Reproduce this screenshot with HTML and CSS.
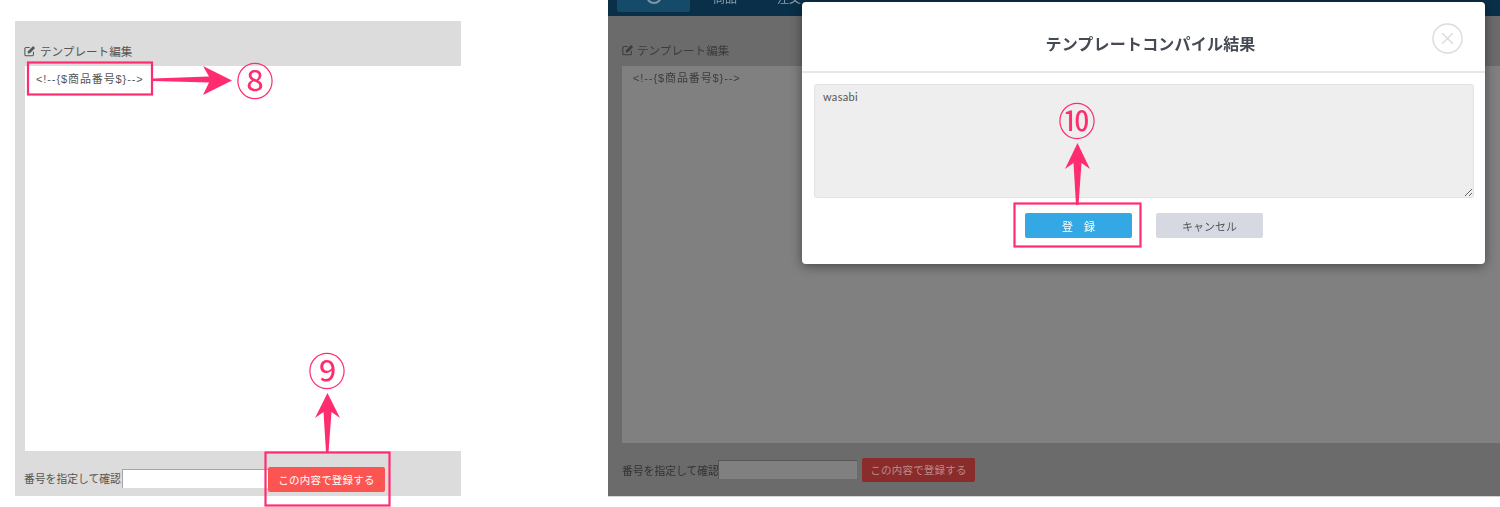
FILE: index.html
```html
<!DOCTYPE html>
<html lang="ja">
<head>
    <meta charset="UTF-8">
    <title>テンプレート編集</title>
    <link rel="stylesheet" href="styles.css">
</head>
<body>
    <div class="page">
        <!-- left capture -->
        <section class="shot shot-light">
            <h2 class="edit-title">
                <svg class="edit-icon" viewBox="0 0 14 14"><path d="M11 8v3a1.6 1.6 0 0 1-1.6 1.6H2.6A1.6 1.6 0 0 1 1 11V4.6A1.6 1.6 0 0 1 2.6 3h4"/><path class="pen" d="M5 7.2 10.6 1.6l2 2L7 9.2l-2.400.4z"/></svg>
                テンプレート編集
            </h2>
            <textarea class="editor" readonly>&lt;!--{$商品番号$}--&gt;</textarea>
            <div class="confirm-row">
                <label class="confirm-label">番号を指定して確認</label>
                <input class="confirm-input" type="text">
                <button class="btn-save">この内容で登録する</button>
            </div>
        </section>

        <!-- right capture, dimmed behind the modal -->
        <section class="shot-dark">
            <nav class="topnav">
                <div class="nav-tab"><span class="nav-ring"></span></div>
                <span class="nav-item">商品</span>
                <span class="nav-item">注文</span>
            </nav>
            <div class="shot-dark-body">
                <h2 class="edit-title">
                    <svg class="edit-icon" viewBox="0 0 14 14"><path d="M11 8v3a1.6 1.6 0 0 1-1.6 1.6H2.6A1.6 1.6 0 0 1 1 11V4.6A1.6 1.6 0 0 1 2.6 3h4"/><path class="pen" d="M5 7.2 10.6 1.6l2 2L7 9.2l-2.400.4z"/></svg>
                    テンプレート編集
                </h2>
                <textarea class="editor" readonly>&lt;!--{$商品番号$}--&gt;</textarea>
                <div class="confirm-row">
                    <label class="confirm-label">番号を指定して確認</label>
                    <input class="confirm-input" type="text">
                    <button class="btn-save">この内容で登録する</button>
                </div>
            </div>

            <div class="modal">
                <header class="modal-head">
                    <h3 class="modal-title">テンプレートコンパイル結果</h3>
                    <svg class="modal-close" viewBox="0 0 32 32"><circle cx="16" cy="16" r="15"/><path d="M10.500 10.500l11 11M21.500 10.500l-11 11"/></svg>
                </header>
                <div class="modal-body">
                    <textarea class="result" readonly>wasabi</textarea>
                    <div class="modal-actions">
                        <button class="btn-ok">登　録</button>
                        <button class="btn-cancel">キャンセル</button>
                    </div>
                </div>
            </div>
        </section>

        <!-- red annotations drawn on top of the captures -->
        <svg class="marks" viewBox="0 0 1500 507">
            <rect x="28" y="62.500" width="124" height="32"/>
            <rect x="265.500" y="452.500" width="124" height="53"/>
            <rect x="1014.500" y="203.500" width="126" height="43"/>
            <path class="arrow" d="M153 78.500 209 76.500 203 66 232 80.500 203 95 209 82.500 153 81z"/>
            <path class="arrow" d="M326 452 323.500 412 315 418 327.500 393 340 418 331.500 412 328.500 452z"/>
            <path class="arrow" d="M1076 205 1073.500 163 1065 169 1077.500 143 1090 169 1081.500 163 1078.500 205z"/>
        </svg>
        <span class="num num-8">⑧</span>
        <span class="num num-9">⑨</span>
        <span class="num num-10">⑩</span>
    </div>
</body>
</html>
```

FILE: styles.css
```css
* {
    box-sizing: border-box;
}

body {
    margin: 0;
    background-color: white;
    font-family: "Lato", "Noto Sans CJK JP", sans-serif;
    color: #555;
}

/* the captures are slightly soft, they were scaled down */
.page {
    position: relative;
    display: flex;
    width: 1500px;
    height: 507px;
    overflow: hidden;
    padding-left: 15px;
    filter: blur(0.35px);
}

/* left capture */
.shot {
    display: flex;
    flex-direction: column;
    width: 446px;
    height: 475px;
    margin-top: 21px;
    padding-left: 10px;
    background-color: #dcdcdc;
}

.edit-title {
    display: flex;
    align-items: center;
    gap: 4px;
    height: 45px;
    margin: 0 0 0 -1px;
    padding-top: 14px;
    font-size: 11.600px;
    font-weight: normal;
    color: #555;
}

.edit-icon {
    width: 12px;
    height: 12px;
    fill: none;
    stroke: currentColor;
    stroke-width: 1.200;
}

.edit-icon .pen {
    fill: currentColor;
    stroke-width: .5;
}

.editor {
    display: block;
    width: 100%;
    height: 385px;
    padding: 5px 11px;
    border: none;
    border-radius: 0;
    outline: none;
    resize: none;
    background-color: white;
    font-family: "Liberation Sans", "Noto Sans CJK JP", sans-serif;
    font-size: 11px;
    line-height: 17px;
    letter-spacing: .9px;
    color: #555;
}

.confirm-row {
    display: flex;
    align-items: center;
    height: 45px;
    padding-top: 12px;
    margin-left: -1px;
}

.confirm-label {
    width: 98px;
    margin-top: -3px;
    font-size: 10.800px;
    white-space: nowrap;
}

.confirm-input {
    width: 146px;
    height: 19px;
    margin-top: -3px;
    padding: 0;
    border: 1px solid #a5a5a5;
    border-width: 1px 0 0 1px;
    border-radius: 0;
    background-color: white;
}

.btn-save {
    width: 117px;
    height: 25px;
    border: none;
    border-radius: 2px;
    padding: 0;
    background-color: #fb5451;
    color: #fff;
    font-family: inherit;
    font-size: 10.500px;
    letter-spacing: .2px;
}

/* right capture */
.shot-dark {
    position: relative;
    width: 892px;
    height: 496px;
    margin-left: 147px;
    background-color: #6b6b6b;
    box-shadow: 0 1px 0 #d4d4d4;
}

.topnav {
    display: flex;
    height: 16px;
    overflow: hidden;
    background-color: #0a3049;
    font-size: 12px;
    color: #8f9fab;
}

.nav-tab {
    position: relative;
    width: 73px;
    height: 12px;
    margin-left: 9px;
    border-radius: 0 0 2px 2px;
    background-color: #154b68;
}

.nav-ring {
    position: absolute;
    left: 29px;
    top: -12px;
    width: 16px;
    height: 16px;
    border: 2px solid #7f97a6;
    border-radius: 50%;
}

.nav-item {
    margin-top: -11px;
    margin-left: 23px;
    width: 41px;
}

.shot-dark-body {
    height: 480px;
    padding-left: 14px;
    color: #333;
}

.shot-dark-body .edit-title {
    gap: 3px;
    height: 50px;
    margin-left: 0;
    padding-top: 18px;
    color: #3c3c3c;
}

.shot-dark-body .editor {
    height: 377px;
    padding: 4px 11px;
    background-color: #808080;
    color: #3c3c3c;
}

.shot-dark-body .confirm-row {
    height: 53px;
    padding-top: 0;
    margin-left: 0;
}

.shot-dark-body .confirm-label {
    width: 96px;
    margin-top: 0;
    color: #333;
}

.shot-dark-body .confirm-input {
    width: 139px;
    margin-top: -1px;
    background-color: #808080;
    border-color: #555;
}

.shot-dark-body .btn-save {
    width: 113px;
    height: 24px;
    margin-left: 5px;
    background-color: #8a2c2b;
    color: #b98b8a;
}

/* modal */
.modal {
    position: absolute;
    left: 194px;
    top: 2px;
    width: 683px;
    height: 262px;
    border-radius: 4px;
    background-color: white;
    box-shadow: 0 2px 12px rgba(0, 0, 0, 0.45);
}

.modal-head {
    position: relative;
    height: 71px;
    padding-top: 12px;
    border-bottom: 2px solid #e6e6e6;
    display: flex;
    align-items: center;
    justify-content: center;
}

.modal-title {
    margin: 0 0 0 14px;
    font-size: 16px;
    font-weight: bold;
    letter-spacing: .2px;
    color: #454a55;
}

.modal-close {
    position: absolute;
    right: 22px;
    top: 21px;
    width: 31px;
    height: 31px;
    fill: none;
    stroke: #dcdcdc;
    stroke-width: 1.500;
}

.modal-body {
    padding: 11px 11px 0 12px;
}

.result {
    display: block;
    width: 660px;
    height: 114px;
    padding: 5px 8px;
    border: 1px solid #e2e2e2;
    border-radius: 3px;
    outline: none;
    background-color: #eeeeee;
    font-family: inherit;
    font-size: 11px;
    line-height: 13px;
    letter-spacing: .3px;
    color: #555;
}

.modal-actions {
    display: flex;
    gap: 24px;
    justify-content: center;
    margin-top: 15px;
}

.btn-ok,
.btn-cancel {
    width: 107px;
    height: 25px;
    padding: 0;
    border: none;
    border-radius: 2px;
    font-family: inherit;
    font-size: 11px;
}

.btn-ok {
    background-color: #33a8e4;
    color: #fff;
}

.btn-cancel {
    background-color: #d6d9e1;
    color: #555;
}

/* annotations */
.marks {
    position: absolute;
    left: 0;
    top: 0;
    width: 1500px;
    height: 507px;
    fill: none;
    stroke: #ff2d6f;
    stroke-width: 2.200;
    pointer-events: none;
}

.marks .arrow {
    fill: #ff2d6f;
    stroke: none;
}

.num {
    position: absolute;
    width: 40px;
    text-align: center;
    font-family: "Noto Sans CJK JP", sans-serif;
    font-size: 38px;
    line-height: 40px;
    color: #ff2d6f;
}

.num-8 {
    left: 235px;
    top: 59px;
}

.num-9 {
    left: 307px;
    top: 349px;
}

.num-10 {
    left: 1057px;
    top: 99px;
}
```
